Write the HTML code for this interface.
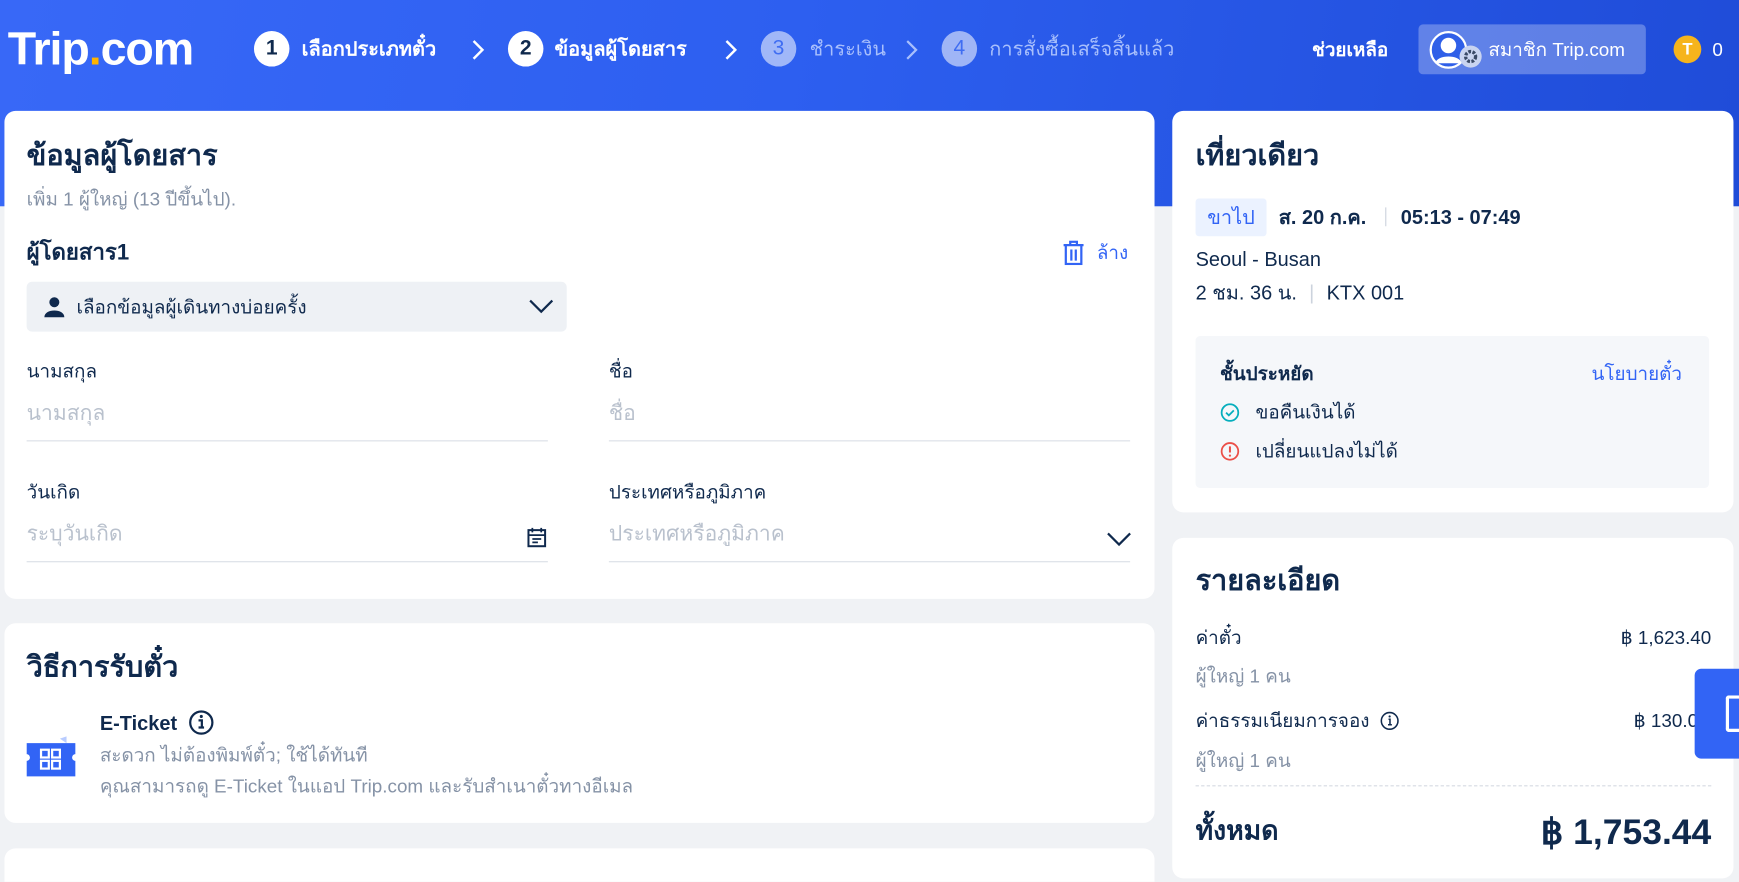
<!DOCTYPE html>
<html><head><meta charset="utf-8"><style>
*{margin:0;padding:0;box-sizing:border-box}
html,body{width:1739px;height:882px;overflow:hidden;background:#f0f2f5}
body{font-family:"Liberation Sans","Noto Sans CJK SC",sans-serif;color:#0f294d}
#w{position:absolute;left:0;top:0;width:1568px;height:795px;overflow:hidden;transform:scale(1.10906);transform-origin:0 0;background:#f0f2f5}
.a{position:absolute;white-space:nowrap}
.hdr{position:absolute;left:0;top:0;width:1568px;height:186px;background:linear-gradient(100deg,#3868f7 0%,#2d5ff0 45%,#1f4cd8 100%)}
.card{position:absolute;background:#fff;border-radius:10px}
.c{line-height:1;transform:translateY(-50%)}
.step{position:absolute;width:32px;height:32px;border-radius:50%;background:#fff;color:#0f294d;font-weight:bold;font-size:19px;text-align:center;line-height:32px;top:28px}
.step.off{background:rgba(255,255,255,.55);color:#3f6df2;font-weight:normal}
.st{position:absolute;top:44px;transform:translateY(-50%);color:#fff;font-weight:bold;font-size:18px;line-height:1}
.st.off{color:#a8bffc;font-weight:normal}
.h1{font-size:26px;font-weight:bold}
.lab{font-size:17px;color:#0f294d}
.ph{font-size:19px;color:#b9c1cd}
.ln{position:absolute;height:1px;background:#dadfe6}
.g{color:#8592a6}
</style></head><body><div id="w">
<div class="hdr"></div>
<div class="a c" style="left:7px;top:44px;font-size:42px;font-weight:bold;color:#fff;letter-spacing:-1px">Trip<span style="color:#ffb400">.</span>com</div>

<div class="step" style="left:229px">1</div><div class="st" style="left:272px">เลือกประเภทตั๋ว</div>
<svg class="a" style="left:424px;top:35px" width="14" height="20"><path d="M3 2l8 8-8 8" stroke="#fff" stroke-width="2.2" fill="none"/></svg>
<div class="step" style="left:458px">2</div><div class="st" style="left:500px">ข้อมูลผู้โดยสาร</div>
<svg class="a" style="left:652px;top:35px" width="14" height="20"><path d="M3 2l8 8-8 8" stroke="#fff" stroke-width="2.2" fill="none"/></svg>
<div class="step off" style="left:686px">3</div><div class="st off" style="left:730px">ชำระเงิน</div>
<svg class="a" style="left:815px;top:35px" width="14" height="20"><path d="M3 2l8 8-8 8" stroke="#a8bffc" stroke-width="2" fill="none"/></svg>
<div class="step off" style="left:849px">4</div><div class="st off" style="left:892px">การสั่งซื้อเสร็จสิ้นแล้ว</div>

<div class="a c" style="left:1183px;top:45px;color:#fff;font-size:17px;font-weight:bold">ช่วยเหลือ</div>
<div class="a" style="left:1279px;top:22px;width:205px;height:45px;background:rgba(255,255,255,.28);border-radius:4px"></div>
<svg class="a" style="left:1288px;top:27px" width="52" height="40"><circle cx="18" cy="18" r="16" fill="#2f5fe8" stroke="#fff" stroke-width="2"/><circle cx="18" cy="14" r="7" fill="#fff"/><path d="M6 30c2-8 22-8 24 0" fill="#fff"/><circle cx="38" cy="24" r="10" fill="#c9d4f0"/><circle cx="38" cy="24" r="4.5" fill="none" stroke="#3a4a66" stroke-width="3" stroke-dasharray="2.5 1.3"/></svg>
<div class="a c" style="left:1342px;top:45px;color:#fff;font-size:17px">สมาชิก Trip.com</div>
<div class="a" style="left:1509px;top:32px;width:25px;height:25px;border-radius:50%;background:#f6b41c;color:#fff;font-weight:bold;font-size:15px;text-align:center;line-height:25px">T</div>
<div class="a c" style="left:1544px;top:45px;color:#fff;font-size:17px">0</div>

<!-- left card -->
<div class="card" style="left:4px;top:100px;width:1037px;height:440px"></div>
<div class="a c h1" style="left:24px;top:140px">ข้อมูลผู้โดยสาร</div>
<div class="a c g" style="left:24px;top:180px;font-size:17px">เพิ่ม 1 ผู้ใหญ่ (13 ปีขึ้นไป).</div>
<div class="a c" style="left:24px;top:228px;font-size:20px;font-weight:bold">ผู้โดยสาร1</div>
<svg class="a" style="left:957px;top:217px" width="22" height="22"><path d="M2 4h18M8 4V1h6v3M4 4v17h14V4M9 8v10M13 8v10" stroke="#3264f5" stroke-width="2" fill="none"/></svg>
<div class="a c" style="left:989px;top:228px;font-size:17px;color:#3264f5">ล้าง</div>
<div class="a" style="left:24px;top:254px;width:487px;height:45px;background:#eef1f5;border-radius:5px"></div>
<svg class="a" style="left:39px;top:267px" width="20" height="20"><circle cx="10" cy="5.5" r="4.5" fill="#0f294d"/><path d="M1 19c0-8 18-8 18 0z" fill="#0f294d"/></svg>
<div class="a c" style="left:69px;top:277px;font-size:17px">เลือกข้อมูลผู้เดินทางบ่อยครั้ง</div>
<svg class="a" style="left:476px;top:268px" width="24" height="16"><path d="M2 3l10 10 10-10" stroke="#0f294d" stroke-width="2" fill="none"/></svg>

<div class="a c lab" style="left:24px;top:335px">นามสกุล</div>
<div class="a c ph" style="left:24px;top:373px">นามสกุล</div>
<div class="ln" style="left:24px;top:397px;width:470px"></div>
<div class="a c lab" style="left:549px;top:335px">ชื่อ</div>
<div class="a c ph" style="left:549px;top:373px">ชื่อ</div>
<div class="ln" style="left:549px;top:397px;width:470px"></div>
<div class="a c lab" style="left:24px;top:444px">วันเกิด</div>
<div class="a c ph" style="left:24px;top:482px">ระบุวันเกิด</div>
<svg class="a" style="left:475px;top:475px" width="18" height="19"><rect x="1.5" y="3" width="15" height="14.5" stroke="#0f294d" stroke-width="1.8" fill="none"/><path d="M5 1v4M13 1v4M1.5 7.5h15M5 11h8M5 14h5" stroke="#0f294d" stroke-width="1.6"/></svg>
<div class="ln" style="left:24px;top:506px;width:470px"></div>
<div class="a c lab" style="left:549px;top:444px">ประเทศหรือภูมิภาค</div>
<div class="a c ph" style="left:549px;top:482px">ประเทศหรือภูมิภาค</div>
<svg class="a" style="left:997px;top:478px" width="24" height="16"><path d="M2 3l10 10 10-10" stroke="#0f294d" stroke-width="2" fill="none"/></svg>
<div class="ln" style="left:549px;top:506px;width:470px"></div>

<!-- card 2 -->
<div class="card" style="left:4px;top:562px;width:1037px;height:180px"></div>
<div class="a c h1" style="left:24px;top:601px">วิธีการรับตั๋ว</div>
<svg class="a" style="left:24px;top:662px" width="44" height="40"><path d="M30 4l6-2v6z" fill="#b9ccff"/><path d="M0 8h44v10a3 3 0 0 0 0 6v14H0V24a3 3 0 0 0 0-6z" fill="#3264f5"/><rect x="13" y="14" width="7" height="7" fill="none" stroke="#fff" stroke-width="2"/><rect x="23" y="14" width="7" height="7" fill="none" stroke="#fff" stroke-width="2"/><rect x="13" y="24" width="7" height="7" fill="none" stroke="#fff" stroke-width="2"/><rect x="23" y="24" width="7" height="7" fill="none" stroke="#fff" stroke-width="2"/></svg>
<div class="a c" style="left:90px;top:652px;font-size:18px;font-weight:bold">E-Ticket</div>
<svg class="a" style="left:170px;top:640px" width="23" height="23"><circle cx="11.5" cy="11.5" r="10" stroke="#0f294d" stroke-width="2" fill="none"/><path d="M9 9.5h3v6.5M9 16h5" stroke="#0f294d" stroke-width="2" fill="none"/><circle cx="11.5" cy="6" r="1.4" fill="#0f294d"/></svg>
<div class="a c g" style="left:90px;top:681px;font-size:17px">สะดวก ไม่ต้องพิมพ์ตั๋ว; ใช้ได้ทันที</div>
<div class="a c g" style="left:90px;top:709px;font-size:17px">คุณสามารถดู E-Ticket ในแอป Trip.com และรับสำเนาตั๋วทางอีเมล</div>

<div class="card" style="left:4px;top:765px;width:1037px;height:60px"></div>
<div class="a c h1" style="left:24px;top:815px">ข้อมูลการติดต่อ</div>

<!-- right card 1 -->
<div class="card" style="left:1057px;top:100px;width:506px;height:362px"></div>
<div class="a c h1" style="left:1078px;top:140px">เที่ยวเดียว</div>
<div class="a" style="left:1078px;top:179px;width:64px;height:34px;background:#ebf2ff;border-radius:3px;color:#3264f5;font-size:18px;text-align:center;line-height:34px">ขาไป</div>
<div class="a c" style="left:1153px;top:196px;font-size:18px;font-weight:bold">ส. 20 ก.ค.</div>
<div class="a" style="left:1249px;top:187px;width:1px;height:17px;background:#ccd3dd"></div>
<div class="a c" style="left:1263px;top:196px;font-size:18px;font-weight:bold">05:13 - 07:49</div>
<div class="a c" style="left:1078px;top:234px;font-size:18px">Seoul - Busan</div>
<div class="a c" style="left:1078px;top:264px;font-size:18px">2 ชม. 36 น. <span style="color:#ccd3dd;margin:0 6px">|</span> KTX 001</div>
<div class="a" style="left:1078px;top:303px;width:463px;height:137px;background:#f5f7fa;border-radius:4px"></div>
<div class="a c" style="left:1100px;top:337px;font-size:17px;font-weight:bold">ชั้นประหยัด</div>
<div class="a c" style="left:1435px;top:337px;font-size:17px;color:#3264f5">นโยบายตั๋ว</div>
<svg class="a" style="left:1100px;top:363px" width="18" height="18"><circle cx="9" cy="9" r="7.5" stroke="#06aebd" stroke-width="1.6" fill="none"/><path d="M5.5 9l2.5 2.5 4.5-4.5" stroke="#06aebd" stroke-width="1.6" fill="none"/></svg>
<div class="a c" style="left:1132px;top:372px;font-size:17px">ขอคืนเงินได้</div>
<svg class="a" style="left:1100px;top:398px" width="18" height="18"><circle cx="9" cy="9" r="7.5" stroke="#eb4f48" stroke-width="1.6" fill="none"/><path d="M9 4.5v5.5" stroke="#eb4f48" stroke-width="1.8"/><circle cx="9" cy="12.8" r="1" fill="#eb4f48"/></svg>
<div class="a c" style="left:1132px;top:407px;font-size:17px">เปลี่ยนแปลงไม่ได้</div>

<!-- right card 2 -->
<div class="card" style="left:1057px;top:485px;width:506px;height:307px"></div>
<div class="a c h1" style="left:1078px;top:523px">รายละเอียด</div>
<div class="a c" style="left:1078px;top:575px;font-size:17px">ค่าตั๋ว</div>
<div class="a c" style="right:25px;top:575px;font-size:17px">฿ 1,623.40</div>
<div class="a c g" style="left:1078px;top:610px;font-size:17px">ผู้ใหญ่ 1 คน</div>
<div class="a c" style="left:1078px;top:650px;font-size:17px">ค่าธรรมเนียมการจอง</div>
<svg class="a" style="left:1244px;top:641px" width="18" height="18"><circle cx="9" cy="9" r="7.5" stroke="#0f294d" stroke-width="1.4" fill="none"/><path d="M8 7.5h1.3v5M7.5 12.5h3.5" stroke="#0f294d" stroke-width="1.4" fill="none"/><circle cx="9" cy="5" r="1" fill="#0f294d"/></svg>
<div class="a c" style="left:1473px;top:650px;font-size:17px">฿ 130.00</div>
<div class="a c g" style="left:1078px;top:686px;font-size:17px">ผู้ใหญ่ 1 คน</div>
<div class="a" style="left:1078px;top:708px;width:465px;border-top:1px dashed #d5dae2"></div>
<div class="a c" style="left:1078px;top:750px;font-size:24px;font-weight:bold">ทั้งหมด</div>
<div class="a c" style="right:25px;top:750px;font-size:32px;font-weight:bold">฿ 1,753.44</div>

<div class="a" style="left:1528px;top:603px;width:45px;height:81px;background:#3264f5;border-radius:6px 0 0 6px"></div>
<div class="a" style="left:1556px;top:627px;width:14px;height:33px;border:3px solid #fff;border-right:none;border-radius:3px 0 0 3px"></div>
</div></body></html>
